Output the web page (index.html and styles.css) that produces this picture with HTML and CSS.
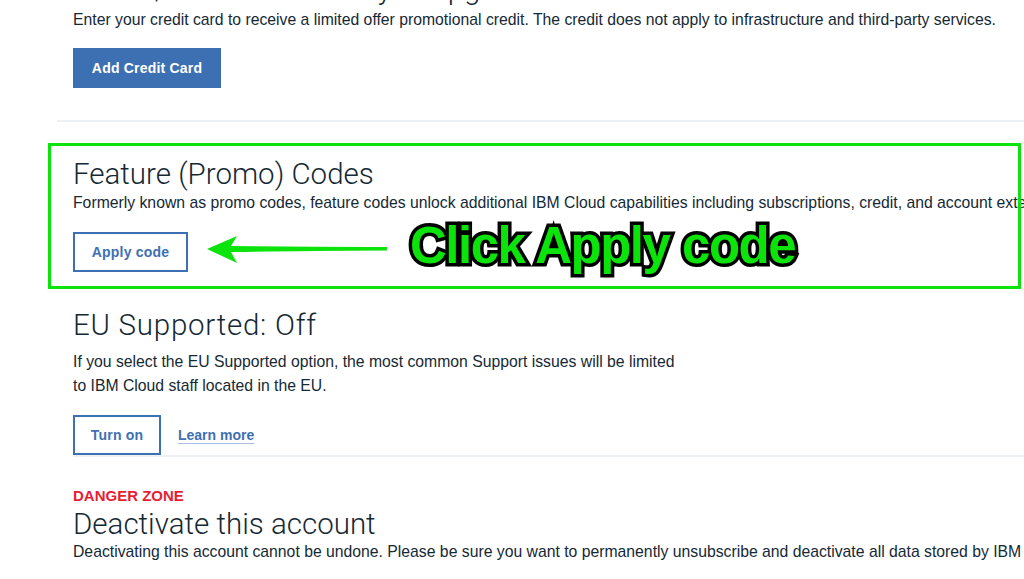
FILE: index.html
```html
<!DOCTYPE html>
<html>
<head>
<meta charset="utf-8">
<link rel="stylesheet" href="styles.css">
</head>
<body>
<div class="page">
  <section class="sec sec-top">
    <h2 class="title">Get a $200 credit when you upgrade</h2>
    <p class="desc nowrap">Enter your credit card to receive a limited offer promotional credit. The credit does not apply to infrastructure and third-party services.</p>
    <button class="btn btn-primary">Add Credit Card</button>
  </section>
  <hr class="divider divider-wide">
  <section class="sec sec-promo">
    <h2 class="title">Feature (Promo) Codes</h2>
    <p class="desc nowrap">Formerly known as promo codes, feature codes unlock additional IBM Cloud capabilities including subscriptions, credit, and account extensions.</p>
    <button class="btn btn-secondary">Apply code</button>
  </section>
  <section class="sec sec-eu">
    <h2 class="title title-eu">EU Supported: Off</h2>
    <p class="desc wrap">If you select the EU Supported option, the most common Support issues will be limited to IBM Cloud staff located in the EU.</p>
    <div class="actions">
      <button class="btn btn-secondary btn-small">Turn on</button>
      <a class="link" href="#">Learn more</a>
    </div>
  </section>
  <hr class="divider">
  <section class="sec sec-danger">
    <div class="danger">DANGER ZONE</div>
    <h2 class="title title-danger">Deactivate this account</h2>
    <p class="desc nowrap">Deactivating this account cannot be undone. Please be sure you want to permanently unsubscribe and deactivate all data stored by IBM Cloud.</p>
  </section>

  <div class="anno-box"></div>
  <svg class="anno-arrow" width="190" height="40" viewBox="0 0 190 40">
    <path d="M0 13 L30 0 L24 10 Q90 10.5 180 11 L180 14.5 Q90 15 24 16 L30 27 Z" fill="#0be30b"/>
  </svg>
  <div class="anno-label">Click Apply code</div>
</div>
</body>
</html>
```
FILE: styles.css
```css
html, body {
  margin: 0;
  padding: 0;
  background: #ffffff;
}
body {
  width: 1024px;
  height: 579px;
  overflow: hidden;
  font-family: "Liberation Sans", Arial, sans-serif;
  color: #152935;
}
.page {
  position: relative;
  display: flow-root;
  overflow: hidden;
  height: 579px;
  padding-left: 73px;
}
.sec {
  display: flex;
  flex-direction: column;
  align-items: flex-start;
}
.sec-top {
  margin-top: -29px;
}
.title {
  margin: 0;
  font-family: Roboto, "Liberation Sans", sans-serif;
  font-weight: 300;
  font-size: 29.5px;
  line-height: 36px;
  color: #152935;
  white-space: nowrap;
}
.title-eu {
  letter-spacing: 0.75px;
}
.desc {
  margin: 1px 0 0;
  font-size: 15.75px;
  line-height: 24px;
  color: #152935;
}
.nowrap {
  white-space: nowrap;
}
.wrap {
  width: 612px;
}
.btn {
  margin-top: 16px;
  height: 40px;
  padding: 0;
  font-family: "Liberation Sans", Arial, sans-serif;
  font-weight: 700;
  font-size: 14px;
  letter-spacing: 0.2px;
  white-space: nowrap;
  cursor: pointer;
  box-sizing: border-box;
}
.btn-primary {
  background: #3d70b2;
  color: #ffffff;
  border: 1px solid #3d70b2;
  width: 148px;
}
.btn-secondary {
  background: #ffffff;
  color: #3d70b2;
  border: 2px solid #3d70b2;
  width: 115px;
}
.btn-small {
  width: 88px;
  margin-top: 0;
  height: 40px;
}
.divider {
  margin: 32px 0 0;
  border: 0;
  height: 2px;
  background: #eef1f4;
}
.divider-wide {
  margin-left: -16px;
}
.sec-promo .title {
  margin-top: 35px;
  line-height: 34px;
}
.sec-promo .desc {
  margin-top: 0;
}
.sec-promo .btn {
  margin-top: 17px;
}
.sec-eu .title {
  margin-top: 36px;
  line-height: 34px;
}
.sec-eu .desc {
  margin-top: 8px;
}
.actions {
  margin-top: 17px;
  display: flex;
  align-items: center;
  gap: 17px;
}
.link {
  color: #3d70b2;
  font-weight: 700;
  font-size: 14px;
  text-decoration: underline;
  text-decoration-color: #a9bfdc;
  text-underline-offset: 3px;
}
.sec-eu + .divider {
  margin-top: 0;
}
.danger {
  margin-top: 30px;
  color: #e71d32;
  font-weight: 700;
  font-size: 15px;
  line-height: 18px;
}
.title-danger {
  margin-top: 3px;
  line-height: 32px;
}
.sec-danger .desc {
  margin-top: 0;
}

/* annotation overlay */
.anno-box {
  position: absolute;
  left: 48px;
  top: 143px;
  width: 967px;
  height: 140px;
  border: 3px solid #0be30b;
}
.anno-arrow {
  position: absolute;
  left: 207px;
  top: 236px;
}
.anno-label {
  position: absolute;
  left: 410px;
  top: 218px;
  font-family: "Liberation Sans", Arial, sans-serif;
  font-weight: 700;
  font-size: 51px;
  line-height: 56px;
  letter-spacing: -1.5px;
  color: #0be30b;
  -webkit-text-stroke: 7px #000000;
  paint-order: stroke fill;
  white-space: nowrap;
  text-shadow: 1px 2px 2px rgba(0,0,0,0.5);
}
```
